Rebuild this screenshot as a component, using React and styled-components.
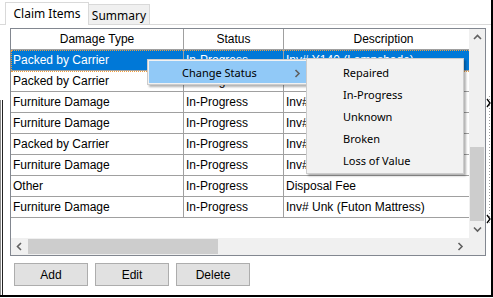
import React from "react";
import styled, { createGlobalStyle, css } from "styled-components";

const Global = createGlobalStyle`
  html, body { margin: 0; padding: 0; background: #fff; }
  body { font-family: "Liberation Sans", Arial, sans-serif; font-size: 12px; color: #000; }
  * { box-sizing: border-box; }
`;

const Frame = styled.div`
  position: relative;
  width: 493px;
  height: 297px;
  border-right: 2px solid #000;
  border-bottom: 2px solid #000;
  background: #fff;
  overflow: hidden;
`;

const TabStrip = styled.div`
  display: flex;
  align-items: flex-end;
  height: 24px;
  padding-left: 5px;
`;

const Tab = styled.div`
  position: relative;
  display: flex;
  align-items: center;
  justify-content: center;
  font-family: "Noto Sans", "Open Sans", sans-serif;
  font-size: 12px;
  border: 1px solid #d9d9d9;
  border-bottom: none;
  ${(p) =>
    p.$active
      ? css`
          width: 84px;
          height: 23px;
          margin-bottom: -1px;
          background: #fff;
          z-index: 2;
          padding-bottom: 2px;
        `
      : css`
          width: 62px;
          height: 20px;
          margin-left: -1px;
          background: #f0f0f0;
          padding-top: 1px;
        `}
`;

const Panel = styled.div`
  border-top: 1px solid #d9d9d9;
  padding: 3px 0 0 10px;
`;

const Grid = styled.div`
  width: 476px;
  height: 228px;
  border: 1px solid #828790;
  display: flex;
  flex-direction: column;
`;

const GridBody = styled.div`
  display: flex;
  height: 209px;
`;

const Viewport = styled.div`
  width: 458px;
  height: 209px;
  overflow: hidden;
  background: #fff;
`;

const RowBase = styled.div`
  position: relative;
  display: grid;
  grid-template-columns: 173px 100px 200px;
  height: 21px;
  width: 473px;
  border-bottom: 1px solid #a0a0a0;
`;

const HeaderRow = styled(RowBase)``;

const Row = styled(RowBase)`
  ${(p) =>
    p.$selected &&
    css`
      background: #0078d7;
      color: #fff;
      &::after {
        content: "";
        position: absolute;
        left: 0;
        top: 0;
        width: 458px;
        height: 20px;
        border: 1px dotted #f0a040;
      }
    `}
`;

const Cell = styled.div`
  display: flex;
  align-items: center;
  padding-left: 2px;
  white-space: nowrap;
  overflow: hidden;
  border-right: 1px solid #a0a0a0;
  ${(p) => p.$head && css`justify-content: center; padding-left: 0;`}
`;

const VScroll = styled.div`
  width: 16px;
  height: 209px;
  background: #f0f0f0;
  display: flex;
  flex-direction: column;
`;

const ArrowBtn = styled.div`
  flex: 0 0 17px;
  display: flex;
  align-items: center;
  justify-content: center;
`;

const VTrack = styled.div`
  flex: 1;
  display: flex;
  flex-direction: column;
  justify-content: flex-end;
`;

const VThumb = styled.div`
  height: 74px;
  margin: 0 1px;
  background: #cdcdcd;
`;

const HScrollRow = styled.div`
  display: flex;
  height: 17px;
  background: #f0f0f0;
`;

const HScroll = styled.div`
  display: flex;
  width: 458px;
  height: 17px;
`;

const HTrack = styled.div`
  flex: 1;
  display: flex;
  align-items: center;
`;

const HThumb = styled.div`
  width: 190px;
  height: 15px;
  background: #cdcdcd;
`;

const HArrow = styled.div`
  flex: 0 0 17px;
  display: flex;
  align-items: center;
  justify-content: center;
`;

const ButtonRow = styled.div`
  display: flex;
  gap: 7px;
  margin-top: 7px;
  padding-left: 4px;
`;

const Button = styled.div`
  width: 74px;
  height: 23px;
  display: flex;
  align-items: center;
  justify-content: center;
  background: #e1e1e1;
  border: 1px solid #adadad;
`;

const Menu = styled.div`
  position: absolute;
  left: ${(p) => p.$x}px;
  top: ${(p) => p.$y}px;
  width: ${(p) => p.$w}px;
  padding: ${(p) => p.$pad}px 1px;
  background: #f2f2f2;
  border: 1px solid #cccccc;
  box-shadow: 2px 2px 2px rgba(0, 0, 0, 0.3);
  font-family: "Noto Sans", "Open Sans", sans-serif;
  font-size: 11px;
  z-index: ${(p) => p.$z};
`;

const MenuItem = styled.div`
  position: relative;
  display: flex;
  align-items: center;
  height: 22px;
  padding-left: ${(p) => p.$indent}px;
  background: ${(p) => (p.$hot ? "#91c9f7" : "transparent")};
`;

const SubArrow = styled.span`
  position: absolute;
  left: 145px;
  top: 5px;
`;

const Splitter = styled.div`
  position: absolute;
  left: 486px;
  top: 96px;
  width: 5px;
  height: 128px;
`;

const LeftEdge = styled.div`
  position: absolute;
  left: 0;
  top: 100px;
  bottom: 0;
  width: 3px;
  border-left: 1px solid #8c8c8c;
  border-right: 1px solid #222;
`;

const Chevron = ({ dir }) => {
  const pts = {
    up: "1,5 4.5,1.5 8,5",
    down: "1,1.5 4.5,5 8,1.5",
    left: "5,1 1.5,4.5 5,8",
    right: "1.5,1 5,4.5 1.5,8",
  }[dir];
  const vertical = dir === "up" || dir === "down";
  return (
    <svg width={vertical ? 9 : 7} height={vertical ? 7 : 9} viewBox={vertical ? "0 0 9 7" : "0 0 7 9"}>
      <polyline points={pts} fill="none" stroke="#606060" strokeWidth="1.6" />
    </svg>
  );
};

const rows = [
  ["Packed by Carrier", "In-Progress", "Inv# Y140 (Lampshade)"],
  ["Packed by Carrier", "In-Progress", "Inv# Y140 (Lampshade)"],
  ["Furniture Damage", "In-Progress", "Inv# 201 (Dresser)"],
  ["Furniture Damage", "In-Progress", "Inv# 203 (Nightstand)"],
  ["Packed by Carrier", "In-Progress", "Inv# Y142 (Lamp)"],
  ["Furniture Damage", "In-Progress", "Inv# 210 (Bookcase)"],
  ["Other", "In-Progress", "Disposal Fee"],
  ["Furniture Damage", "In-Progress", "Inv# Unk (Futon Mattress)"],
];

const subItems = ["Repaired", "In-Progress", "Unknown", "Broken", "Loss of Value"];

export default function App() {
  return (
    <>
      <Global />
      <Frame>
        <TabStrip>
          <Tab $active>Claim Items</Tab>
          <Tab>Summary</Tab>
        </TabStrip>
        <Panel>
          <Grid>
            <GridBody>
              <Viewport>
                <HeaderRow>
                  <Cell $head>Damage Type</Cell>
                  <Cell $head>Status</Cell>
                  <Cell $head>Description</Cell>
                </HeaderRow>
                {rows.map((r, i) => (
                  <Row key={i} $selected={i === 0}>
                    <Cell>{r[0]}</Cell>
                    <Cell>{r[1]}</Cell>
                    <Cell>{r[2]}</Cell>
                  </Row>
                ))}
              </Viewport>
              <VScroll>
                <ArrowBtn>
                  <Chevron dir="up" />
                </ArrowBtn>
                <VTrack>
                  <VThumb />
                </VTrack>
                <ArrowBtn>
                  <Chevron dir="down" />
                </ArrowBtn>
              </VScroll>
            </GridBody>
            <HScrollRow>
              <HScroll>
                <HArrow>
                  <Chevron dir="left" />
                </HArrow>
                <HTrack>
                  <HThumb />
                </HTrack>
                <HArrow>
                  <Chevron dir="right" />
                </HArrow>
              </HScroll>
            </HScrollRow>
          </Grid>
          <ButtonRow>
            <Button>Add</Button>
            <Button>Edit</Button>
            <Button>Delete</Button>
          </ButtonRow>
        </Panel>

        <Menu $x={147} $y={59} $w={161} $pad={1} $z={5}>
          <MenuItem $hot $indent={33}>
            Change Status
            <SubArrow>
              <Chevron dir="right" />
            </SubArrow>
          </MenuItem>
        </Menu>
        <Menu $x={306} $y={58} $w={158} $pad={2} $z={6}>
          {subItems.map((s) => (
            <MenuItem key={s} $indent={35}>
              {s}
            </MenuItem>
          ))}
        </Menu>

        <Splitter>
          <svg width="5" height="128" viewBox="0 0 5 128">
            <line x1="3.5" y1="0" x2="3.5" y2="128" stroke="#9a9a9a" strokeDasharray="1 2" />
            <polyline points="1,3 4,7 1,11" fill="none" stroke="#000" strokeWidth="1.3" />
            <polyline points="1,119 4,123 1,127" fill="none" stroke="#000" strokeWidth="1.3" />
          </svg>
        </Splitter>
        <LeftEdge />
      </Frame>
    </>
  );
}
